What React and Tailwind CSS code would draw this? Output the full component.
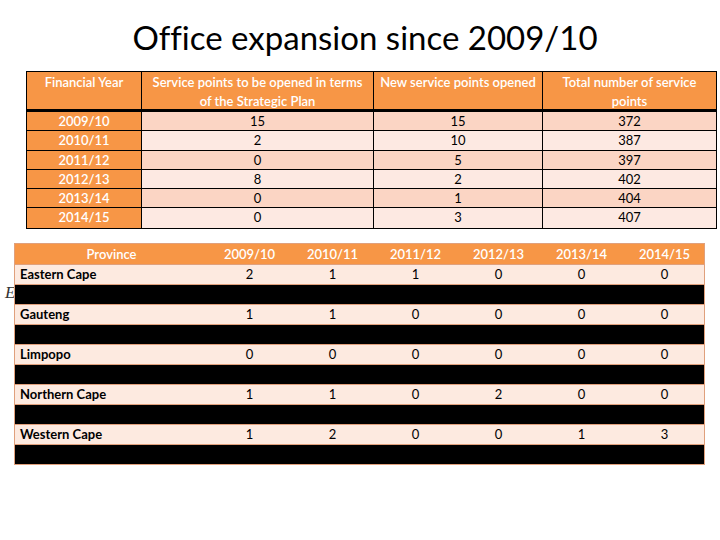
const plan = [
  ['2009/10', '15', '15', '372'],
  ['2010/11', '2', '10', '387'],
  ['2011/12', '0', '5', '397'],
  ['2012/13', '8', '2', '402'],
  ['2013/14', '0', '1', '404'],
  ['2014/15', '0', '3', '407'],
]

const years = ['2009/10', '2010/11', '2011/12', '2012/13', '2013/14', '2014/15']

const provinces = [
  ['Eastern Cape', 2, 1, 1, 0, 0, 0],
  ['Gauteng', 1, 1, 0, 0, 0, 0],
  ['Limpopo', 0, 0, 0, 0, 0, 0],
  ['Northern Cape', 1, 1, 0, 2, 0, 0],
  ['Western Cape', 1, 2, 0, 0, 1, 3],
]

const font = { fontFamily: 'Lato, "Open Sans", sans-serif' }

export default function App() {
  return (
    <div className="w-[720px] h-[540px] bg-white relative overflow-hidden" style={font}>
      <h1 className="pt-[17px] h-[71px] text-center text-[33px] leading-[40px] text-black pl-[10px] [font-variant-ligatures:none]">
        Office expansion since 2009/10
      </h1>

      {/* Top table */}
      <div className="ml-[26px] w-[691px] border border-black text-[13px]">
        <div className="grid grid-cols-[115px_232px_169px_173px] h-[40px] bg-[#f79646] text-white font-semibold border-b-[3px] border-black leading-[19px]">
          <div className="border-r border-black text-center pt-[1px]">Financial Year</div>
          <div className="border-r border-black text-center pt-[1px]">Service points to be opened in terms<br />of the Strategic Plan</div>
          <div className="border-r border-black text-center pt-[1px]">New service points opened</div>
          <div className="text-center pt-[1px]">Total number of service<br />points</div>
        </div>
        {plan.map((r, i) => (
          <div
            key={r[0]}
            className={`grid grid-cols-[115px_232px_169px_173px] h-[19.3px] leading-[18px] ${i < plan.length - 1 ? 'border-b border-black' : ''} ${i % 2 === 0 ? 'bg-[#fbd5c4]' : 'bg-[#fde9e2]'}`}
          >
            <div className="bg-[#f79646] text-white font-semibold text-center border-r border-black">{r[0]}</div>
            <div className="text-center border-r border-black">{r[1]}</div>
            <div className="text-center border-r border-black">{r[2]}</div>
            <div className="text-center">{r[3]}</div>
          </div>
        ))}
      </div>

      {/* stray letter peeking out behind the lower table */}
      <span className="absolute left-[5px] top-[280px] text-[17px] italic text-[#333]" style={{ fontFamily: '"Liberation Serif", serif' }}>E</span>

      {/* Province table */}
      <div className="relative ml-[14px] mt-[14px] w-[691px] border border-[#e0a07c] text-[13px]">
        <div className="grid grid-cols-[193px_repeat(6,83px)] h-[20px] bg-[#f79646] text-white font-semibold leading-[20px] text-center">
          <div>Province</div>
          {years.map(y => <div key={y}>{y}</div>)}
        </div>
        {provinces.map(p => (
          <div key={p[0]}>
            <div className="grid grid-cols-[193px_repeat(6,83px)] h-[20px] bg-[#fdeae0] leading-[19px] border-t border-[#e0a07c]">
              <div className="font-bold pl-[5px]">{p[0]}</div>
              {p.slice(1).map((v, j) => <div key={j} className="text-center">{v}</div>)}
            </div>
            <div className="h-[20px] bg-black border-t border-[#e0a07c]" />
          </div>
        ))}
      </div>
    </div>
  )
}
